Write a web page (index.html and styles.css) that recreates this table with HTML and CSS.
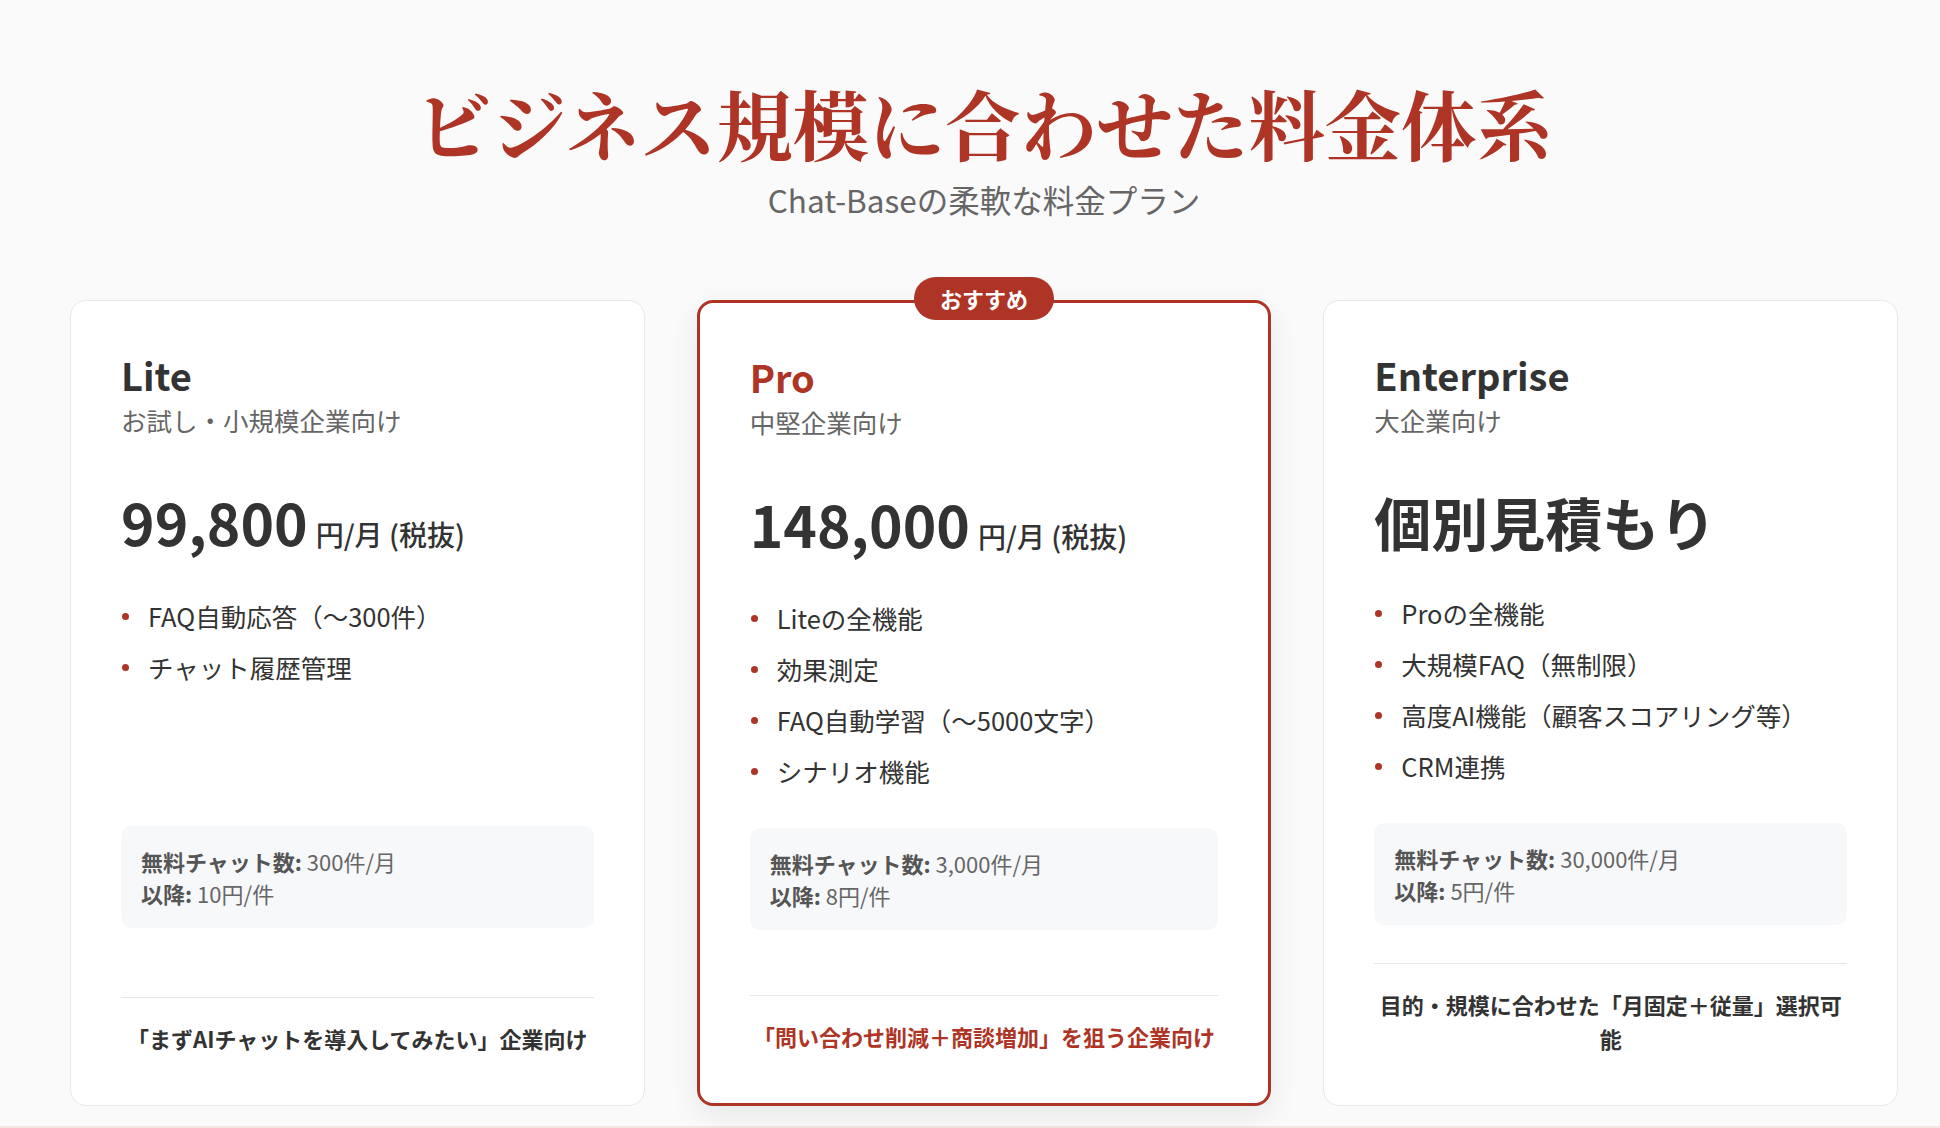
FILE: index.html
```html
<!DOCTYPE html>
<html lang="ja">
<head>
<meta charset="utf-8">
<title>料金プラン</title>
<link rel="stylesheet" href="styles.css">
</head>
<body>
<section class="pricing">
  <div class="wrap">
    <h1 class="title">ビジネス規模に合わせた料金体系</h1>
    <p class="lead">Chat-Baseの柔軟な料金プラン</p>
    <div class="cards">
      <article class="card">
        <h2 class="plan">Lite</h2>
        <p class="target">お試し・小規模企業向け</p>
        <div class="price"><span class="amount">99,800</span><span class="unit">円/月 (税抜)</span></div>
        <ul class="features">
          <li>FAQ自動応答（〜300件）</li>
          <li>チャット履歴管理</li>
        </ul>
        <div class="info">
          <p><b>無料チャット数:</b> 300件/月</p>
          <p><b>以降:</b> 10円/件</p>
        </div>
        <p class="foot">「まずAIチャットを導入してみたい」企業向け</p>
      </article>
      <article class="card card-pro">
        <span class="badge">おすすめ</span>
        <h2 class="plan">Pro</h2>
        <p class="target">中堅企業向け</p>
        <div class="price"><span class="amount">148,000</span><span class="unit">円/月 (税抜)</span></div>
        <ul class="features">
          <li>Liteの全機能</li>
          <li>効果測定</li>
          <li>FAQ自動学習（〜5000文字）</li>
          <li>シナリオ機能</li>
        </ul>
        <div class="info">
          <p><b>無料チャット数:</b> 3,000件/月</p>
          <p><b>以降:</b> 8円/件</p>
        </div>
        <p class="foot">「問い合わせ削減＋商談増加」を狙う企業向け</p>
      </article>
      <article class="card">
        <h2 class="plan">Enterprise</h2>
        <p class="target">大企業向け</p>
        <div class="price"><span class="amount">個別見積もり</span></div>
        <ul class="features">
          <li>Proの全機能</li>
          <li>大規模FAQ（無制限）</li>
          <li>高度AI機能（顧客スコアリング等）</li>
          <li>CRM連携</li>
        </ul>
        <div class="info">
          <p><b>無料チャット数:</b> 30,000件/月</p>
          <p><b>以降:</b> 5円/件</p>
        </div>
        <p class="foot">目的・規模に合わせた「月固定＋従量」選択可能</p>
      </article>
    </div>
  </div>
</section>
<section class="next"></section>
</body>
</html>
```

FILE: styles.css
```css
* { box-sizing: border-box; }
html, body { margin: 0; padding: 0; }
body {
  background: #fafafa;
  font-family: "Noto Sans CJK JP", "Noto Sans", sans-serif;
  color: #333;
}
.pricing {
  padding: 78px 0 20px;
}
.wrap {
  width: 1828px;
  margin-left: 70px;
}
.title {
  margin: 0;
  text-align: center;
  font-family: "Noto Serif CJK JP", "Noto Sans CJK JP", serif;
  font-weight: 700;
  font-size: 76px;
  line-height: 90px;
  color: #ae3426;
}
.lead {
  margin: 9px 0 0;
  text-align: center;
  font-size: 31.5px;
  line-height: 45px;
  color: #666;
}
.cards {
  margin-top: 78px;
  display: grid;
  grid-template-columns: repeat(3, 1fr);
  gap: 52px;
  align-items: stretch;
}
.card {
  position: relative;
  display: flex;
  flex-direction: column;
  background: #fff;
  border: 1px solid #e8e8e8;
  border-radius: 16px;
  padding: 50px 50px 50px;
}
.card-pro {
  border: 3px solid #ae3426;
  box-shadow: 0 10px 30px rgba(0, 0, 0, 0.08);
}
.badge {
  position: absolute;
  top: -26px;
  left: 50%;
  transform: translateX(-50%);
  height: 43px;
  padding: 0 26px;
  border-radius: 22px;
  background: #ae3426;
  color: #fff;
  font-weight: 700;
  font-size: 22px;
  line-height: 43px;
  white-space: nowrap;
}
.plan {
  margin: 0;
  font-size: 38px;
  line-height: 48px;
  font-weight: 700;
  color: #333;
}
.card-pro .plan { color: #ae3426; }
.target {
  margin: 2px 0 0;
  font-size: 25.5px;
  line-height: 37px;
  color: #666;
}
.price {
  margin-top: 50px;
  display: flex;
  align-items: baseline;
  gap: 8px;
}
.amount {
  font-size: 57px;
  line-height: 67px;
  font-weight: 700;
  color: #333;
}
.unit {
  font-size: 28px;
  line-height: 48px;
  font-weight: 500;
  color: #333;
}
.features {
  list-style: none;
  margin: 38px 0 0;
  padding: 0;
  min-height: 193px;
  display: flex;
  flex-direction: column;
  gap: 11px;
}
.features li {
  display: flex;
  align-items: center;
  gap: 19px;
  font-size: 25.5px;
  line-height: 40px;
  color: #333;
}
.features li::before {
  content: "";
  flex: none;
  width: 7px;
  height: 7px;
  margin-left: 1px;
  border-radius: 50%;
  background: #ae3426;
}
.info {
  margin-top: 37px;
  background: #f7f8fa;
  border-radius: 10px;
  padding: 19px 20px;
}
.info p {
  margin: 0;
  font-size: 22px;
  line-height: 32px;
  color: #666;
}
.info b {
  font-weight: 700;
  color: #555;
}
.foot {
  margin: auto 0 0;
  padding-top: 62px;
  font-size: 22px;
  line-height: 33.5px;
  font-weight: 700;
  text-align: center;
  color: #333;
}
.foot::before {
  content: "";
  display: block;
  height: 1px;
  background: #e6e6e6;
  margin: -24px 0 24px;
}
.card-pro .foot { color: #ae3426; }
.next {
  height: 3px;
  background: #f5e6e4;
}
```
